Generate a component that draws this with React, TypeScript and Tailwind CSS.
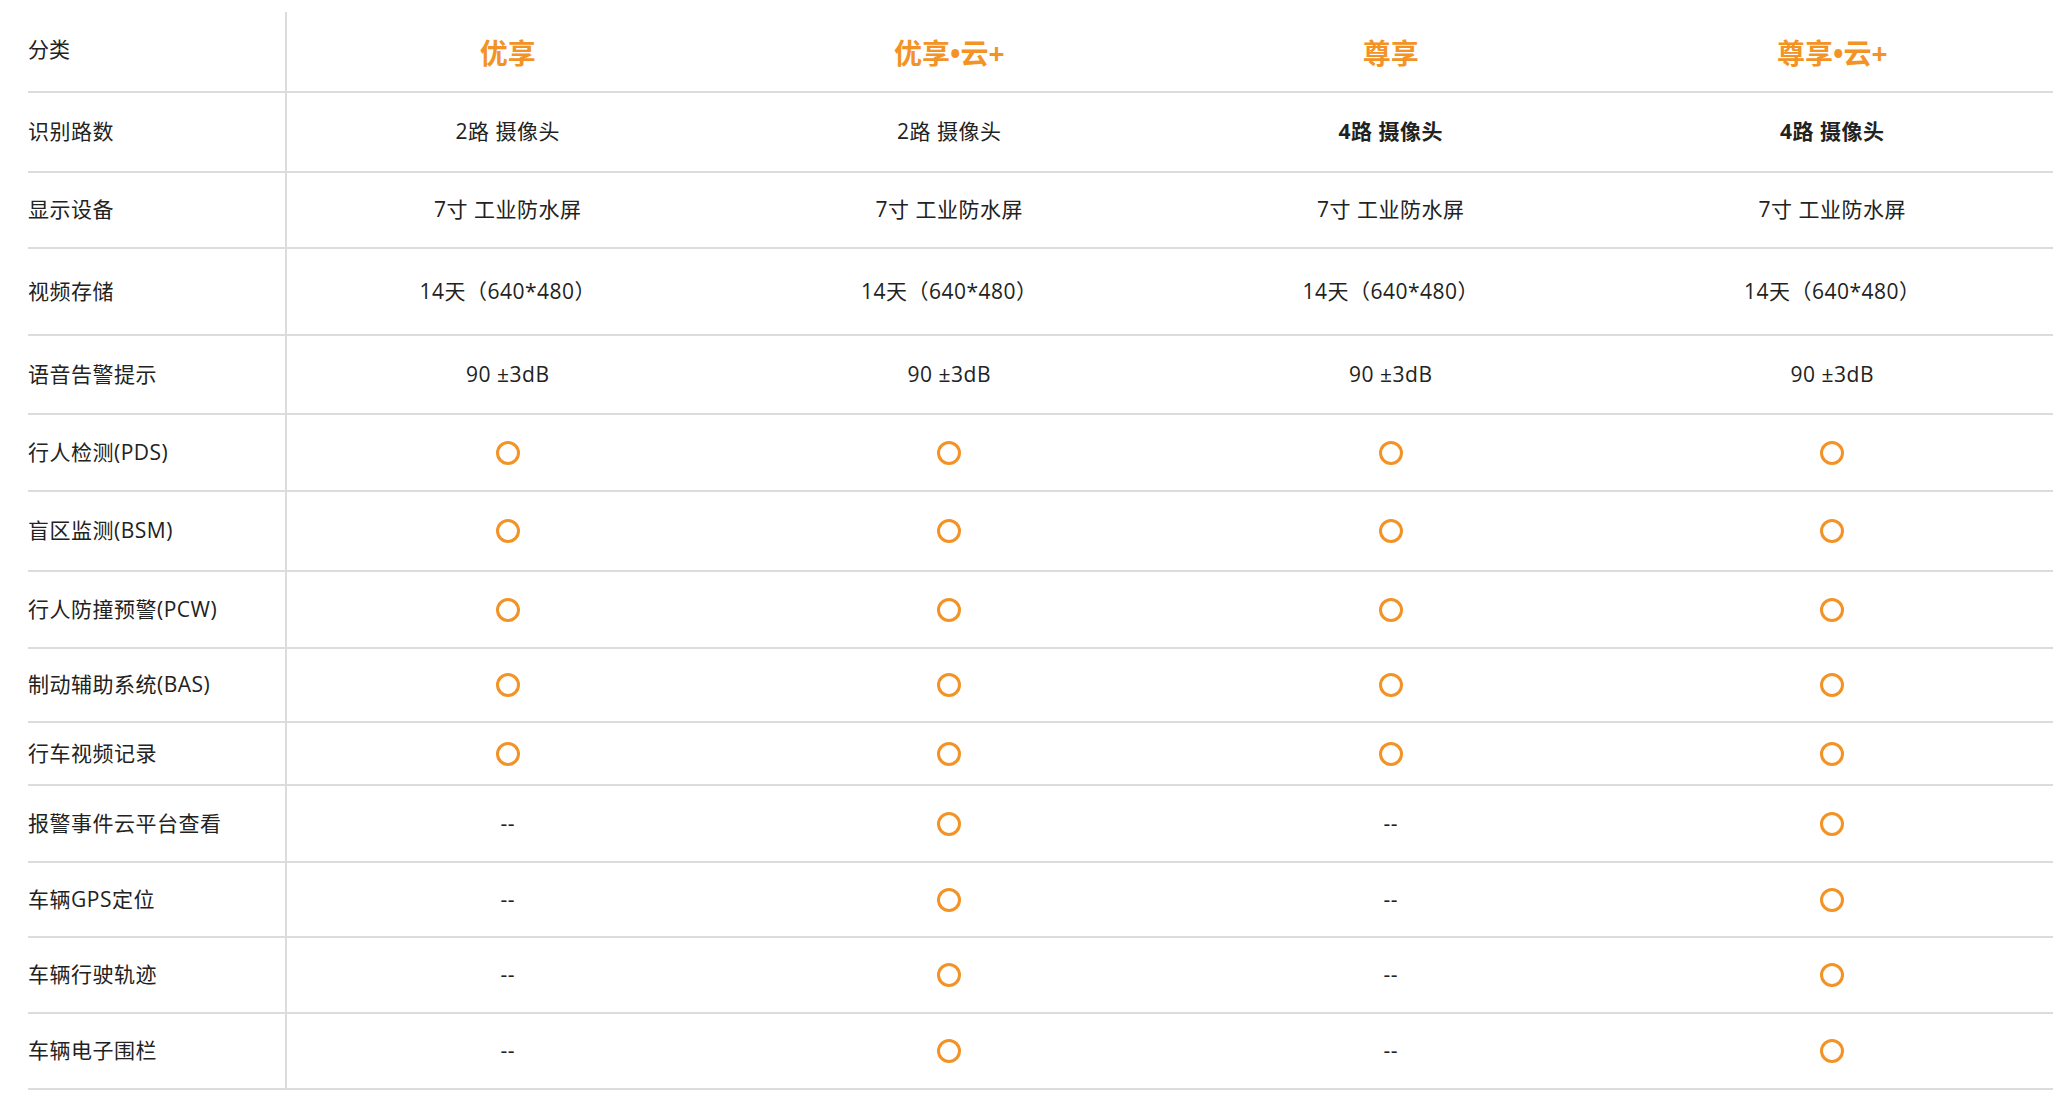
const O = 'O';
const rows: { label: string; h: number; cells: string[] }[] = [
  { label: '识别路数', h: 80, cells: ['2路 摄像头', '2路 摄像头', '4路 摄像头', '4路 摄像头'] },
  { label: '显示设备', h: 76, cells: ['7寸 工业防水屏', '7寸 工业防水屏', '7寸 工业防水屏', '7寸 工业防水屏'] },
  { label: '视频存储', h: 87, cells: ['14天（640*480）', '14天（640*480）', '14天（640*480）', '14天（640*480）'] },
  { label: '语音告警提示', h: 79, cells: ['90 ±3dB', '90 ±3dB', '90 ±3dB', '90 ±3dB'] },
  { label: '行人检测(PDS)', h: 77, cells: [O, O, O, O] },
  { label: '盲区监测(BSM)', h: 80, cells: [O, O, O, O] },
  { label: '行人防撞预警(PCW)', h: 77, cells: [O, O, O, O] },
  { label: '制动辅助系统(BAS)', h: 74, cells: [O, O, O, O] },
  { label: '行车视频记录', h: 63, cells: [O, O, O, O] },
  { label: '报警事件云平台查看', h: 77, cells: ['--', O, '--', O] },
  { label: '车辆GPS定位', h: 75, cells: ['--', O, '--', O] },
  { label: '车辆行驶轨迹', h: 76, cells: ['--', O, '--', O] },
  { label: '车辆电子围栏', h: 76, cells: ['--', O, '--', O] },
];

const heads = ['优享', '优享•云+', '尊享', '尊享•云+'];

function Ring() {
  return (
    <svg width="26" height="26" viewBox="0 0 26 26">
      <circle cx="13" cy="13" r="10.5" fill="none" stroke="#f39325" strokeWidth="3" />
    </svg>
  );
}

export default function App() {
  const font = { fontFamily: '"Open Sans", "Noto Sans CJK SC", sans-serif' };
  return (
    <div className="w-[2070px] h-[1106px] bg-white pt-[12px] pl-[28px] text-[#222]" style={font}>
      <div className="w-[2026px] max-w-[2026px]" style={{ width: 2025 }}>
        <div className="flex h-[81px] border-b-2 border-[#dcdcdc]">
          <div className="w-[259px] border-r-2 border-[#dcdcdc] pt-[22px] text-[21px]">分类</div>
          {heads.map((h, i) => (
            <div key={i} className="flex-1 text-center pt-[20px] text-[28px] font-bold text-[#f39325]">{h}</div>
          ))}
        </div>
        {rows.map((r, i) => (
          <div key={i} className="flex border-b-2 border-[#dcdcdc]" style={{ height: r.h }}>
            <div className="w-[259px] border-r-2 border-[#dcdcdc] flex items-center text-[21px] tracking-[0.5px]">{r.label}</div>
            {r.cells.map((c, j) => (
              <div
                key={j}
                className={`flex-1 flex items-center justify-center text-[21px] tracking-[0.5px] ${i === 0 && j >= 2 ? 'font-bold' : ''}`}
              >
                {c === O ? <Ring /> : c}
              </div>
            ))}
          </div>
        ))}
      </div>
    </div>
  );
}
